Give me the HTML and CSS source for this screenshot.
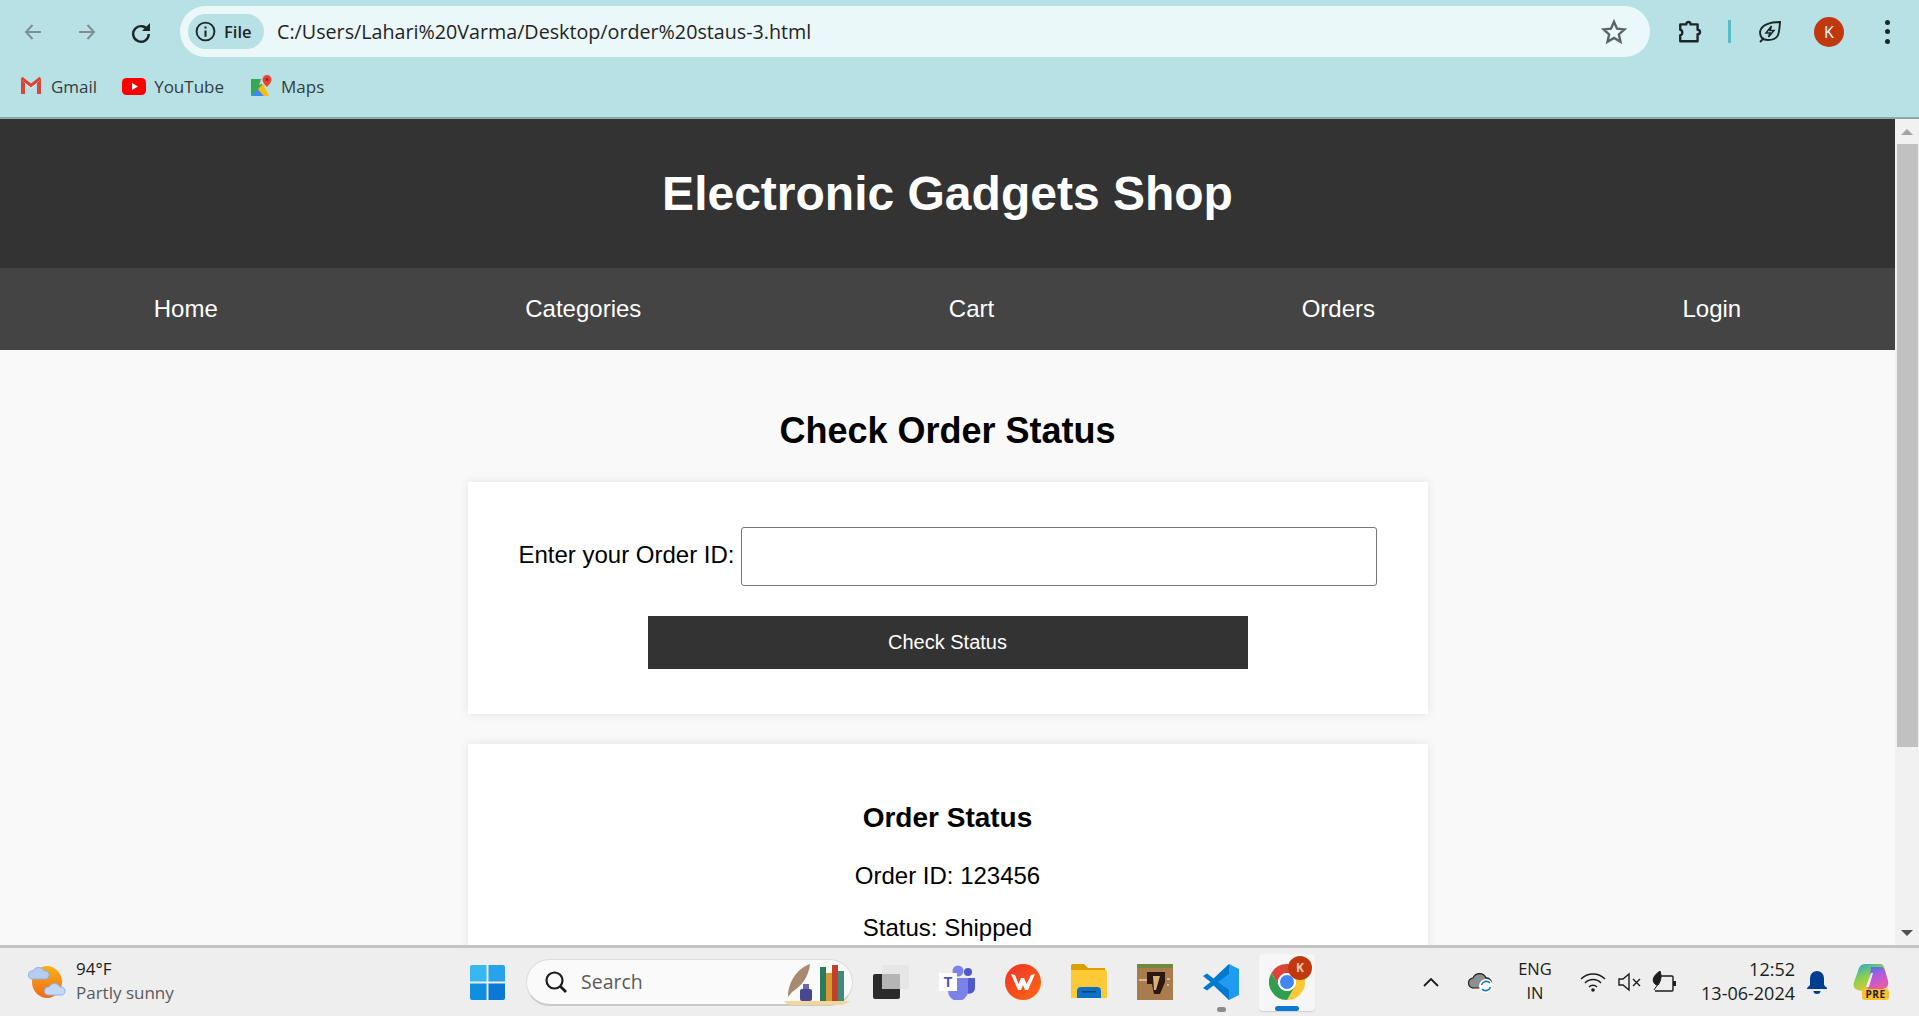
FILE: index.html
```html
<!DOCTYPE html>
<html lang="en">
<head>
    <meta charset="UTF-8">
    <meta name="viewport" content="width=device-width, initial-scale=1.0">
    <title>Electronic Gadgets Shop</title>
    <link rel="stylesheet" href="styles.css">
</head>
<body>
    <div class="browser-bar">
        <div class="toolbar">
            <div class="nav-buttons">
                <svg class="tool-icon" viewBox="0 0 24 24"><path d="M20 12H5M11.5 5 5 12l6.500 7" fill="none" stroke="#7c9094" stroke-width="2"/></svg>
                <svg class="tool-icon" viewBox="0 0 24 24"><path d="M4 12h15M12.500 5 19 12l-6.500 7" fill="none" stroke="#7c9094" stroke-width="2"/></svg>
                <svg class="tool-icon" viewBox="0 0 24 24"><path d="M19 10.500A7.800 7.800 0 1 0 19.800 14" fill="none" stroke="#1f2427" stroke-width="2.400"/><path d="M21 3v8h-8z" fill="#1f2427"/></svg>
            </div>
            <div class="url-pill">
                <div class="file-chip">
                    <svg class="info-icon" viewBox="0 0 20 20"><circle cx="10" cy="10" r="8.500" fill="none" stroke="#1f2427" stroke-width="1.800"/><path d="M10 9v6M10 5.200v2" stroke="#1f2427" stroke-width="2" fill="none"/></svg>
                    <span>File</span>
                </div>
                <span class="url-text">C:/Users/Lahari%20Varma/Desktop/order%20staus-3.html</span>
                <svg class="star-icon" viewBox="0 0 24 24"><path d="M12 2.500l2.800 6.400 6.900.7-5.200 4.600 1.500 6.800-6-3.500-6 3.500 1.500-6.800-5.200-4.600 6.900-.7z" fill="none" stroke="#5b6367" stroke-width="2.200"/></svg>
            </div>
            <div class="tool-right">
                <svg class="puzzle-icon" viewBox="0 0 24 24"><path d="M3 5h5.500c0-3 4-3 4 0H19v5c3 0 3 4 0 4v6.500H3V15c2.500 0 2.500-5 0-5z" fill="none" stroke="#1f2427" stroke-width="2.200" stroke-linejoin="round"/></svg>
                <span class="tool-sep"></span>
                <svg class="leaf-icon" viewBox="0 0 24 24"><path d="M22 2C21 12 22 20 10 20 4 20 2 16 2 12 3 5 12 2 22 2zM2 22l4-4" fill="none" stroke="#1f2427" stroke-width="1.900"/><path d="M13.500 6 8 13h4l-1.500 4L16 10.500h-4z" fill="none" stroke="#1f2427" stroke-width="1.500"/></svg>
                <span class="avatar">K</span>
                <div class="menu-dots"><i></i><i></i><i></i></div>
            </div>
        </div>
        <div class="bookmarks">
            <div class="bookmark">
                <svg class="bm-icon" viewBox="0 0 24 24"><path d="M2 5v15h4V10l6 5 6-5v10h4V5l-2-1.500-8 6.500-8-6.500z" fill="#e8e8e8"/><path d="M2 5.500V20h4V9z" fill="#d9453a"/><path d="M22 5.500V20h-4V9z" fill="#d9453a"/><path d="M2.500 4 12 11.500 21.500 4" fill="none" stroke="#d9453a" stroke-width="3"/></svg>
                <span>Gmail</span>
            </div>
            <div class="bookmark">
                <svg class="bm-icon" viewBox="0 0 24 24"><rect x="0" y="4" width="24" height="17" rx="4.500" fill="#f00"/><path d="M10 9v7l6-3.500z" fill="#fff"/></svg>
                <span>YouTube</span>
            </div>
            <div class="bookmark">
                <svg class="bm-icon" viewBox="0 0 24 24"><path d="M2 5h11v9L2 22z" fill="#36a853"/><path d="M2 22l7-7 6 7z" fill="#4285f4"/><path d="M9 15l5-5 6 12h-5z" fill="#fbbc04"/><path d="M13 3h4l-3 6-4 2z" fill="#d8d8d8"/><path d="M18 1a4.500 4.500 0 0 0-4.500 4.500C13.500 9 18 13 18 13s4.500-4 4.500-7.500A4.500 4.500 0 0 0 18 1z" fill="#ea4335"/><circle cx="18" cy="5.500" r="1.600" fill="#8c2a22"/></svg>
                <span>Maps</span>
            </div>
        </div>
    </div>

    <div class="viewport">
        <div class="page">
            <header class="site-header">
                <h1>Electronic Gadgets Shop</h1>
            </header>
            <nav class="site-nav">
                <a href="#">Home</a>
                <a href="#">Categories</a>
                <a href="#">Cart</a>
                <a href="#">Orders</a>
                <a href="#">Login</a>
            </nav>
            <main class="content">
                <h2>Check Order Status</h2>
                <form class="card order-form">
                    <div class="form-row">
                        <label for="order-id">Enter your Order ID:</label>
                        <input id="order-id" type="text">
                    </div>
                    <button type="button" class="check-btn">Check Status</button>
                </form>
                <section class="card status-card">
                    <h3>Order Status</h3>
                    <p>Order ID: 123456</p>
                    <p>Status: Shipped</p>
                </section>
            </main>
        </div>
        <div class="scrollbar">
            <span class="arrow-up"></span>
            <div class="scroll-track"><div class="scroll-thumb"></div></div>
            <span class="arrow-down"></span>
        </div>
    </div>

    <div class="taskbar">
        <div class="weather">
            <svg class="weather-icon" viewBox="0 0 38 36"><defs><linearGradient id="sun" x1="0" y1="0" x2="0" y2="1"><stop offset="0" stop-color="#f7b21c"/><stop offset="1" stop-color="#ee6a12"/></linearGradient></defs><ellipse cx="19" cy="18" rx="15" ry="16" fill="url(#sun)"/><path d="M4 15a4 4 0 0 1 1-8 6 6 0 0 1 11 0 4 4 0 0 1 2 8z" fill="#b5cdf2" stroke="#8fb0e6"/><path d="M20 31a4 4 0 0 1 1-8 6 6 0 0 1 11 0 4 4 0 0 1 2 8z" fill="#c4d8f5" stroke="#8fb0e6"/></svg>
            <div class="weather-text">
                <span class="temp">94°F</span>
                <span class="cond">Partly sunny</span>
            </div>
        </div>
        <svg class="start-icon" viewBox="0 0 36 36"><path d="M0 2a2 2 0 0 1 2-2h15v17H0z" fill="#38b8f2"/><path d="M19 0h15a2 2 0 0 1 2 2v15H19z" fill="#2aa2ea"/><path d="M0 19h17v17H2a2 2 0 0 1-2-2z" fill="#0f8fe0"/><path d="M19 19h17v15a2 2 0 0 1-2 2H19z" fill="#0a78d4"/></svg>
        <div class="search-box">
            <svg class="search-icon" viewBox="0 0 24 24"><circle cx="10.500" cy="10.500" r="8" fill="none" stroke="#1c1c1c" stroke-width="2.200"/><path d="M16 16l6 6" stroke="#1c1c1c" stroke-width="2.800"/></svg>
            <span>Search</span>
            <svg class="search-art" viewBox="0 0 72 46"><path d="M4 42h66q-4 4-10 4H14q-8 0-10-4z" fill="#f3d79a"/><path d="M8 38C8 24 16 10 30 5c-1 12-8 22-18 28z" fill="#a98a70"/><rect x="20" y="30" width="12" height="12" rx="2" fill="#4a4790"/><rect x="23" y="25" width="6" height="5" fill="#6a68b0"/><rect x="40" y="8" width="6" height="34" fill="#2c7a5e"/><rect x="46" y="14" width="6" height="28" fill="#d69a33"/><rect x="52" y="6" width="6" height="36" fill="#c2412d"/><rect x="58" y="12" width="6" height="30" fill="#3f8a78"/></svg>
        </div>
        <div class="task-icons">
            <div class="task-slot">
                <svg class="task-icon" viewBox="0 0 36 36"><rect x="0" y="10" width="27" height="25" rx="2" fill="#2b2b2b"/><rect x="9" y="1" width="27" height="24" rx="2" fill="#e6e6e6"/><rect x="9" y="10" width="18" height="15" fill="#b5b5b5"/></svg>
            </div>
            <div class="task-slot">
                <svg class="task-icon" viewBox="0 0 36 36"><circle cx="29" cy="8" r="4" fill="#5059c9"/><path d="M23 14h13v10a6 6 0 0 1-9 5z" fill="#5059c9"/><circle cx="19" cy="7" r="5.500" fill="#7b83eb"/><path d="M9 14h20v13a9 9 0 0 1-20 0z" fill="#7b83eb"/><rect x="0" y="9" width="18" height="18" fill="#fff"/><text x="9" y="23" class="teams-t">T</text></svg>
            </div>
            <div class="task-slot">
                <svg class="task-icon" viewBox="0 0 36 36"><defs><linearGradient id="wps" x1="0" y1="0" x2="1" y2="1"><stop offset="0" stop-color="#f0302a"/><stop offset="1" stop-color="#ff6a10"/></linearGradient></defs><circle cx="18" cy="18" r="18" fill="url(#wps)"/><path d="M6 10l7 16h3l2-5 2 5h3l7-16-4 1-4.500 9-2.500-6h-3l-2.500 6L10 11z" fill="#fff"/></svg>
            </div>
            <div class="task-slot">
                <svg class="task-icon" viewBox="0 0 36 36"><path d="M0 2a2 2 0 0 1 2-2h11l4 4h17v6H0z" fill="#d9a000"/><path d="M0 6h34a2 2 0 0 1 2 2v26H0z" fill="#fdc937"/><path d="M6 34V27a4 4 0 0 1 4-4h16a4 4 0 0 1 4 4v7z" fill="#0a71c4"/><rect x="11" y="27" width="14" height="1.500" fill="#063f72"/></svg>
            </div>
            <div class="task-slot">
                <svg class="task-icon" viewBox="0 0 36 36"><rect width="36" height="36" fill="#a97c4d"/><rect width="36" height="4" fill="#6f8a3c"/><path d="M10 8h18v10l-5 12h-6l-2-10h-5z" fill="#2c1712"/><path d="M16 12h7l-4 14h-2z" fill="#d8b07a"/><rect x="2" y="15" width="8" height="2" fill="#d8b994"/><rect x="30" y="14" width="3" height="2" fill="#d8b994"/><rect x="30" y="20" width="2" height="2" fill="#d8b994"/></svg>
            </div>
            <div class="task-slot has-dot">
                <svg class="task-icon" viewBox="0 0 36 36"><path d="M26 0 36 5v26l-10 5-13-15z" fill="#1f9cf0"/><path d="M26 0 10.500 14.500 4 9.500 0 12l7.500 6L0 24l4 2.500 6.500-5L26 36V26L15 18 26 10z" fill="#007acc"/></svg>
            </div>
            <div class="task-slot active-slot">
                <svg class="task-icon" viewBox="0 0 36 36"><path d="M2.410 9A18 18 0 0 1 33.590 9H18A9 9 0 0 0 10.210 22.500z" fill="#db4437"/><path d="M33.590 9A18 18 0 0 1 18 36L25.790 22.500A9 9 0 0 0 18 9z" fill="#fcc934"/><path d="M18 36A18 18 0 0 1 2.410 9L10.210 22.500A9 9 0 0 0 25.790 22.500z" fill="#2f9e4f"/><circle cx="18" cy="18" r="9" fill="#fff"/><circle cx="18" cy="18" r="7" fill="#4285f4"/></svg>
                <span class="chrome-badge">K</span>
            </div>
        </div>
        <div class="tray">
            <svg class="chevron" viewBox="0 0 16 10"><path d="M1 9l7-7 7 7" fill="none" stroke="#1c1c1c" stroke-width="1.800"/></svg>
            <svg class="cloud-icon" viewBox="0 0 26 22"><path d="M6 17a5 5 0 0 1-1-10 7 7 0 0 1 13 0 5 5 0 0 1 1 10z" fill="#8f8f8f" stroke="#1c1c1c" stroke-width="1.200"/><circle cx="18" cy="15" r="7" fill="#fff"/><path d="M13.500 14a5 5 0 0 1 8.500-2M22.500 16a5 5 0 0 1-8.500 2" fill="none" stroke="#0a78d4" stroke-width="1.600"/></svg>
            <div class="lang"><span>ENG</span><span>IN</span></div>
            <svg class="wifi-icon" viewBox="0 0 26 20"><path d="M1 7a17 17 0 0 1 24 0M5 11a11 11 0 0 1 16 0M9 15a5.500 5.500 0 0 1 8 0" fill="none" stroke="#1c1c1c" stroke-width="1.500"/><circle cx="13" cy="18" r="1.800" fill="#1c1c1c"/></svg>
            <svg class="mute-icon" viewBox="0 0 24 20"><path d="M1 7v6h4l6 5V2L5 7z" fill="none" stroke="#1c1c1c" stroke-width="1.400"/><path d="M15 7l7 7M22 7l-7 7" stroke="#1c1c1c" stroke-width="1.400"/></svg>
            <svg class="battery-icon" viewBox="0 0 26 22"><path d="M9 5h11a1 1 0 0 1 1 1v13a1 1 0 0 1-1 1H3" fill="none" stroke="#1c1c1c" stroke-width="1.400"/><rect x="21" y="10" width="3" height="5" fill="#1c1c1c"/><path d="M8 0C2 4-1 9 3 13c1 1 2 1 3 1C9 10 10 5 8 0zM2 19l4-6" fill="#1c1c1c" stroke="#1c1c1c"/></svg>
            <div class="clock"><span>12:52</span><span>13-06-2024</span></div>
            <svg class="bell-icon" viewBox="0 0 20 24"><path d="M10 1a7 7 0 0 0-7 7v7l-3 3v1h20v-1l-3-3V8a7 7 0 0 0-7-7z" fill="#003e92"/><path d="M6.500 21h7a3.500 3 0 0 1-7 0z" fill="#003e92"/></svg>
            <div class="copilot">
                <svg class="copilot-icon" viewBox="0 0 36 30"><defs><linearGradient id="cop" x1="0" y1="0" x2="0.600" y2="1"><stop offset="0" stop-color="#1fa4e8"/><stop offset=".5" stop-color="#8fd04a"/><stop offset="1" stop-color="#f3c33a"/></linearGradient><linearGradient id="cop2" x1="0" y1="0" x2="0.400" y2="1"><stop offset="0" stop-color="#2f7fe8"/><stop offset=".5" stop-color="#b758dc"/><stop offset="1" stop-color="#e85aa8"/></linearGradient></defs><path d="M12 0h15c3 0 4 2 5 6l3 11c1 5-2 8-6 8H14L10 27C3 27-1 24 1 18l4-11C6 3 8 0 12 0z" fill="url(#cop)"/><path d="M18 3h10c2 0 3 1 4 4l3 10c1 5-2 8-6 8H15z" fill="url(#cop2)"/><path d="M20 9l-4 14h-3l5-14z" fill="#fff" opacity=".85"/></svg>
                <span class="pre-badge">PRE</span>
            </div>
        </div>
    </div>
</body>
</html>
```

FILE: styles.css
```css
* { box-sizing: border-box; }
html, body { height: 100%; }
body {
    margin: 0;
    display: flex;
    flex-direction: column;
    overflow: hidden;
    font-family: 'Liberation Sans', Arial, sans-serif;
    color: #000;
}

/* browser chrome */
.browser-bar {
    height: 119px;
    flex: none;
    background: #b8e1e5;
    border-bottom: 2px solid #8aa9ac;
    font-family: 'Open Sans', sans-serif;
    color: #1f2427;
}
.toolbar {
    display: flex;
    align-items: center;
    height: 63px;
    padding: 6px 0;
}
.nav-buttons {
    display: flex;
    width: 180px;
    padding-left: 21px;
    gap: 30px;
}
.tool-icon { width: 24px; height: 24px; }
.url-pill {
    display: flex;
    align-items: center;
    width: 1470px;
    height: 51px;
    padding: 0 16px 0 8px;
    background: #ebf8f9;
    border-radius: 26px;
}
.file-chip {
    display: flex;
    align-items: center;
    gap: 8px;
    width: 76px;
    height: 35px;
    padding-left: 7px;
    background: #b8e1e5;
    border-radius: 18px;
    font-size: 16.500px;
    font-weight: 600;
}
.info-icon { width: 21px; height: 21px; flex: none; }
.url-text {
    flex: 1;
    margin-left: 13px;
    font-size: 19.700px;
}
.star-icon { width: 26px; height: 26px; margin-right: 7px; }
.tool-right {
    display: flex;
    align-items: center;
    flex: 1;
}
.puzzle-icon { width: 26px; height: 26px; margin-left: 27px; }
.tool-sep {
    width: 3px;
    height: 23px;
    margin-left: 25px;
    background: #56bcc6;
}
.leaf-icon { width: 24px; height: 24px; margin-left: 27px; }
.avatar {
    width: 30px;
    height: 30px;
    margin-left: 32px;
    border-radius: 50%;
    background: #c1380e;
    color: #fff;
    font-size: 16px;
    line-height: 30px;
    text-align: center;
}
.menu-dots {
    display: flex;
    flex-direction: column;
    gap: 4.500px;
    margin-left: 41px;
}
.menu-dots i {
    width: 5px;
    height: 5px;
    border-radius: 50%;
    background: #1f2427;
}
.bookmarks {
    display: flex;
    align-items: center;
    height: 46px;
    padding-left: 19px;
    gap: 25px;
    font-size: 17px;
    color: #333c40;
}
.bookmark { display: flex; align-items: center; gap: 8px; }
.bm-icon { width: 24px; height: 24px; }

/* page */
.viewport {
    flex: 1;
    display: flex;
    min-height: 0;
}
.page {
    flex: 1;
    overflow: hidden;
    background: #f9f9f9;
}
.site-header {
    height: 149px;
    padding-top: 47px;
    background: #333;
    color: #fff;
    text-align: center;
}
.site-header h1 {
    margin: 0;
    font-size: 48px;
    line-height: 55px;
}
.site-nav {
    display: flex;
    justify-content: space-around;
    align-items: center;
    height: 82px;
    background: #444;
}
.site-nav a {
    color: #fff;
    font-size: 24px;
    text-decoration: none;
}
.content { padding-top: 60px; }
.content h2 {
    margin: 0 0 31px;
    font-size: 36px;
    line-height: 41px;
    text-align: center;
}
.card {
    width: 960px;
    margin: 0 auto 30px;
    padding: 45px;
    background: #fff;
    box-shadow: 0 0 10px rgba(0, 0, 0, 0.1);
}
.form-row {
    display: flex;
    justify-content: center;
    align-items: center;
    gap: 6px;
    font-size: 24px;
}
.form-row label { margin-bottom: 3px; }
.form-row input {
    width: 636px;
    height: 59px;
    border: 1px solid #767676;
    border-radius: 3px;
}
.check-btn {
    display: block;
    width: 600px;
    height: 53px;
    margin: 30px auto 0;
    border: none;
    background: #333;
    color: #fff;
    font-family: inherit;
    font-size: 20px;
}
.status-card { text-align: center; }
.status-card h3 {
    margin: 13px 0 28px;
    font-size: 28px;
    line-height: 32px;
}
.status-card p {
    margin: 0 0 25px;
    font-size: 24px;
    line-height: 27px;
}

/* scrollbar */
.scrollbar {
    flex: none;
    width: 24px;
    display: flex;
    flex-direction: column;
    background: #f1f1f1;
}
.arrow-up, .arrow-down {
    flex: none;
    align-self: center;
    border-left: 6px solid transparent;
    border-right: 6px solid transparent;
}
.arrow-up { margin: 10px 0 9px; border-bottom: 6px solid #a3a3a3; }
.arrow-down { margin: 0 0 9px; border-top: 6px solid #505050; }
.scroll-track { flex: 1; padding: 0 1px 0 2px; }
.scroll-thumb {
    height: 603px;
    background: #c1c1c1;
}

/* windows taskbar */
.taskbar {
    flex: none;
    display: flex;
    align-items: center;
    height: 71px;
    background: #eee;
    border-top: 3px solid #c4c4c4;
    font-family: 'Open Sans', sans-serif;
    color: #1c1c1c;
}
.weather {
    display: flex;
    align-items: center;
    gap: 10px;
    width: 442px;
    margin-left: 28px;
}
.weather-icon { width: 38px; height: 36px; }
.weather-text {
    display: flex;
    flex-direction: column;
    margin-bottom: 2px;
    font-size: 17px;
    line-height: 24px;
}
.cond { color: #5a5a5a; }
.start-icon { width: 35px; height: 35px; }
.search-box {
    display: flex;
    align-items: center;
    width: 327px;
    height: 47px;
    margin-left: 21px;
    padding-left: 17px;
    background: #fafafa;
    border: 1px solid #dcdcdc;
    border-bottom: 2px solid #c9c9c9;
    border-radius: 24px;
    font-size: 19.500px;
    color: #5a5a5a;
}
.search-icon { width: 24px; height: 24px; margin-right: 13px; }
.search-art { width: 72px; height: 46px; margin-left: auto; }
.task-icons { display: flex; margin-left: 5px; }
.task-slot {
    position: relative;
    display: flex;
    align-items: center;
    justify-content: center;
    width: 66px;
    height: 57px;
}
.task-icon { width: 36px; height: 36px; }
.teams-t {
    font-family: 'Liberation Sans', sans-serif;
    font-size: 14px;
    font-weight: bold;
    fill: #4b53bc;
    text-anchor: middle;
}
.has-dot::after {
    content: "";
    position: absolute;
    bottom: -1px;
    left: 29px;
    width: 9px;
    height: 5px;
    border-radius: 3px;
    background: #8a8a8a;
}
.active-slot {
    width: 56px;
    margin-left: 5px;
    background: #f6f6f6;
    border-radius: 4px;
    box-shadow: 0 1px 1px rgba(0, 0, 0, 0.12);
}
.active-slot::after {
    content: "";
    position: absolute;
    bottom: 0;
    left: 16px;
    width: 24px;
    height: 5px;
    border-radius: 3px;
    background: #0a78d4;
}
.chrome-badge {
    position: absolute;
    top: 2px;
    right: 3px;
    width: 24px;
    height: 24px;
    border-radius: 50%;
    background: #c1380e;
    color: #f3c9bb;
    font-size: 12px;
    font-weight: 700;
    line-height: 24px;
    text-align: center;
}
.tray {
    flex: 1;
    display: flex;
    align-items: center;
    font-size: 16px;
}
.chevron { width: 16px; height: 10px; margin-left: 108px; }
.cloud-icon { width: 26px; height: 22px; margin-left: 29px; }
.lang {
    display: flex;
    flex-direction: column;
    align-items: center;
    width: 50px;
    margin-left: 16px;
    margin-bottom: 2px;
    font-size: 16.500px;
    line-height: 24px;
}
.wifi-icon { width: 26px; height: 20px; margin-left: 20px; }
.mute-icon { width: 24px; height: 20px; margin-left: 12px; }
.battery-icon { width: 26px; height: 22px; margin-left: 10px; }
.clock {
    display: flex;
    flex-direction: column;
    align-items: flex-end;
    width: 117px;
    margin-bottom: 2px;
    font-size: 18px;
    line-height: 24px;
}
.bell-icon { width: 20px; height: 24px; margin-left: 12px; }
.copilot { position: relative; width: 36px; height: 36px; margin-left: 26px; }
.copilot-icon { width: 36px; height: 30px; display: block; }
.pre-badge {
    position: absolute;
    right: 0;
    bottom: 0;
    width: 27px;
    height: 11px;
    border-radius: 3px;
    background: #fbc02d;
    font-size: 10px;
    font-weight: 700;
    line-height: 11px;
    letter-spacing: 0.5px;
    text-align: center;
}
```
